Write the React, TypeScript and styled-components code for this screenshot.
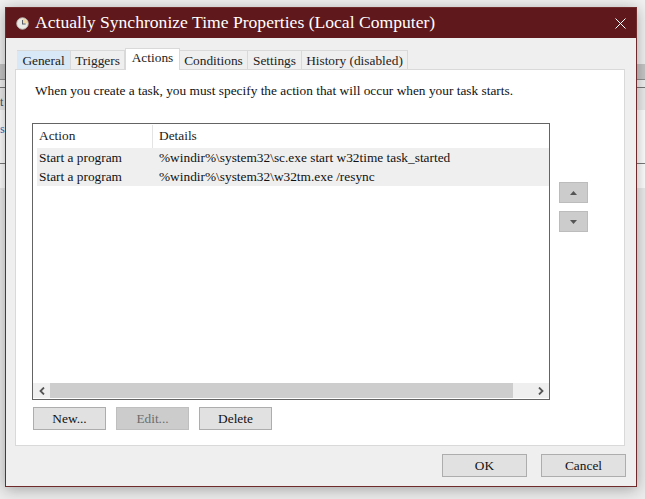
import React from 'react'
import styled, { createGlobalStyle } from 'styled-components'

const GlobalStyle = createGlobalStyle`
    html, body {
        margin: 0;
        padding: 0;
        width: 645px;
        height: 499px;
        overflow: hidden;
        background: #f1f1f1;
    }
    body {
        font-family: "Liberation Serif", "DejaVu Serif", serif;
        font-size: 13.35px;
        color: #111111;
    }
`

const Page = styled.div`
    position: relative;
    width: 645px;
    height: 499px;
    overflow: hidden;
`

// the blurred app behind the dialog, only its edges show
const Backdrop = styled.div`
    display: flex;
    flex-direction: column;
    width: 100%;
    height: 100%;
    padding-top: 64px;
    box-sizing: border-box;
`

const BackBand = styled.div<{ $h: number; $bg: string; $line?: string; $lh?: number }>`
    height: ${(p) => p.$h}px;
    background: ${(p) => p.$bg};
    border-bottom: ${(p) => (p.$line ? `1px solid ${p.$line}` : 'none')};
    flex: 0 0 auto;
    overflow: hidden;
    font-size: 12px;
    line-height: ${(p) => p.$lh ?? p.$h}px;
`

const BackGlyph = styled.span<{ $color: string }>`
    color: ${(p) => p.$color};
`

const Dialog = styled.div`
    position: absolute;
    left: 5px;
    top: 7px;
    width: 632px;
    height: 480px;
    box-sizing: border-box;
    border: 1px solid #6f2a2c;
    background: #efefef;
    box-shadow: 0 2px 14px rgba(0, 0, 0, 0.32);
    display: flex;
    flex-direction: column;
`

const TitleBar = styled.div`
    display: flex;
    align-items: center;
    height: 30px;
    flex: 0 0 auto;
    background: #5f181b;
    padding: 0 10px;
    color: #ffffff;
`

const Title = styled.div`
    font-size: 17.6px;
    line-height: 28px;
    height: 30px;
    flex: 1;
    margin-left: 6px;
    white-space: nowrap;
`

const CloseIcon = styled.svg`
    width: 11px;
    height: 11px;
`

const Body = styled.div`
    flex: 1;
    display: flex;
    flex-direction: column;
    padding: 12px 10px 0 9px;
`

const TabRow = styled.div`
    display: flex;
    align-items: flex-end;
    height: 20px;
    padding-left: 2px;
    position: relative;
    z-index: 1;
    margin-bottom: -1px;
`

const Tab = styled.div<{ $active?: boolean; $hover?: boolean; $w: number }>`
    box-sizing: border-box;
    width: ${(p) => p.$w}px;
    height: ${(p) => (p.$active ? 22 : 20)}px;
    line-height: ${(p) => (p.$active ? 18 : 20)}px;
    text-align: center;
    white-space: nowrap;
    background: ${(p) => (p.$active ? '#ffffff' : p.$hover ? '#d8e8f6' : '#efefef')};
    border: 1px solid #d9d9d9;
    border-left-width: ${(p) => (p.$active ? 1 : 0)}px;
    border-bottom: ${(p) => (p.$active ? 'none' : '1px solid #d9d9d9')};
    color: #222222;
`

const Panel = styled.div`
    box-sizing: border-box;
    width: 610px;
    height: 377px;
    background: #ffffff;
    border: 1px solid #d9d9d9;
    padding: 14px 16px 0 16px;
    display: flex;
    flex-direction: column;
`

const Intro = styled.div`
    height: 40px;
    line-height: 14px;
    margin-left: 3px;
    white-space: nowrap;
`

const ListRow = styled.div`
    display: flex;
    margin-top: -1px;
`

const ListBox = styled.div`
    box-sizing: border-box;
    width: 518px;
    height: 277px;
    border: 1px solid #646464;
    display: flex;
    flex-direction: column;
    padding-top: 1px;
`

const ListHeader = styled.div`
    display: flex;
    height: 23px;
    flex: 0 0 auto;
`

const HeaderCell = styled.div<{ $w?: number }>`
    box-sizing: border-box;
    ${(p) => (p.$w ? `width: ${p.$w}px;` : 'flex: 1;')}
    height: 100%;
    line-height: 21px;
    padding-left: 6px;
    color: #222222;
    border-right: ${(p) => (p.$w ? '1px solid #e4e4e4' : 'none')};
`

const ListRows = styled.div`
    flex: 1;
`

const ActionRow = styled.div`
    display: flex;
    height: 19px;
    line-height: 20px;
    margin-left: 4px;
    background: #efefef;
    white-space: nowrap;
`

const ActionCell = styled.div<{ $w?: number }>`
    ${(p) => (p.$w ? `width: ${p.$w}px;` : 'flex: 1;')}
    padding-left: 2px;
    box-sizing: border-box;
`

const ScrollBar = styled.div`
    display: flex;
    height: 15px;
    flex: 0 0 auto;
    margin-bottom: 1px;
    background: #efefef;
`

const ScrollArrow = styled.div`
    width: 17px;
    display: flex;
    align-items: center;
    justify-content: center;
    flex: 0 0 auto;
`

const ScrollThumb = styled.div`
    flex: 1;
    background: #cdcdcd;
    margin-right: 19px;
`

const MoveColumn = styled.div`
    display: flex;
    flex-direction: column;
    gap: 8px;
    margin-left: 9px;
    padding-top: 59px;
`

const MoveButton = styled.div`
    box-sizing: border-box;
    width: 29px;
    height: 21px;
    background: #cccccc;
    border: 1px solid #bcbcbc;
    display: flex;
    align-items: center;
    justify-content: center;
`

const ButtonRow = styled.div`
    display: flex;
    gap: 10px;
    margin-top: 7px;
    margin-left: 1px;
`

const Button = styled.div<{ $disabled?: boolean }>`
    box-sizing: border-box;
    width: 73px;
    height: 23px;
    line-height: 21px;
    text-align: center;
    background: ${(p) => (p.$disabled ? '#cccccc' : '#e1e1e1')};
    border: 1px solid ${(p) => (p.$disabled ? '#bfbfbf' : '#adadad')};
    color: ${(p) => (p.$disabled ? '#6d6d6d' : '#111111')};
`

const Footer = styled.div`
    display: flex;
    justify-content: flex-end;
    gap: 14px;
    padding-top: 8px;
`

const FooterButton = styled(Button)`
    width: 85px;
`

const ClockIcon = () => (
    <svg width="13" height="13" viewBox="0 0 14 14">
        <circle cx="7" cy="7" r="6.2" fill="#e9e9e6" stroke="#b9b9b4" />
        <path d="M7 7V1.6A5.4 5.4 0 0 1 12.4 7Z" fill="#f0d9a8" />
        <path d="M7 3.2V7.6H10.4" fill="none" stroke="#56606a" strokeWidth="1.1" />
    </svg>
)

const Triangle = ({ dir }: { dir: 'up' | 'down' }) => (
    <svg width="7" height="4" viewBox="0 0 7 4">
        <path d={dir === 'up' ? 'M0 4L3.5 0L7 4Z' : 'M0 0L7 0L3.5 4Z'} fill="#555555" />
    </svg>
)

const Chevron = ({ dir }: { dir: 'left' | 'right' }) => (
    <svg width="6" height="8" viewBox="0 0 6 8">
        <path
            d={dir === 'left' ? 'M5 .5L1.5 4L5 7.5' : 'M1 .5L4.5 4L1 7.5'}
            fill="none"
            stroke="#555555"
            strokeWidth="1.8"
        />
    </svg>
)

const tabs = [
    { label: 'General', w: 54, hover: true },
    { label: 'Triggers', w: 54 },
    { label: 'Actions', w: 55, active: true },
    { label: 'Conditions', w: 68 },
    { label: 'Settings', w: 54 },
    { label: 'History (disabled)', w: 106 },
]

const actions = [
    '%windir%\\system32\\sc.exe start w32time task_started',
    '%windir%\\system32\\w32tm.exe /resync',
]

export default function App() {
    return (
        <Page>
            <GlobalStyle />
            <Backdrop>
                <BackBand $h={15} $bg="#c6c6c6" $line="#8f8f8f" />
                <BackBand $h={7} $bg="#f1f1f1" $line="#777777" />
                <BackBand $h={22} $bg="#ececec" $lh={28}>
                    <BackGlyph $color="#34506e">t</BackGlyph>
                </BackBand>
                <BackBand $h={53} $bg="#ffffff" $line="#7a7a7a" $lh={38}>
                    <BackGlyph $color="#1a6fc4">s</BackGlyph>
                </BackBand>
                <BackBand $h={24} $bg="#ffffff" />
                <BackBand $h={400} $bg="#ececec" />
            </Backdrop>
            <Dialog>
                <TitleBar>
                    <ClockIcon />
                    <Title>Actually Synchronize Time Properties (Local Computer)</Title>
                    <CloseIcon viewBox="0 0 11 11">
                        <path d="M.5 .5L10.5 10.5M10.5 .5L.5 10.5" stroke="#ffffff" strokeWidth="1" />
                    </CloseIcon>
                </TitleBar>
                <Body>
                    <TabRow>
                        {tabs.map((t) => (
                            <Tab key={t.label} $w={t.w} $active={t.active} $hover={t.hover}>
                                {t.label}
                            </Tab>
                        ))}
                    </TabRow>
                    <Panel>
                        <Intro>When you create a task, you must specify the action that will occur when your task starts.</Intro>
                        <ListRow>
                            <ListBox>
                                <ListHeader>
                                    <HeaderCell $w={120}>Action</HeaderCell>
                                    <HeaderCell>Details</HeaderCell>
                                </ListHeader>
                                <ListRows>
                                    {actions.map((a) => (
                                        <ActionRow key={a}>
                                            <ActionCell $w={120}>Start a program</ActionCell>
                                            <ActionCell>{a}</ActionCell>
                                        </ActionRow>
                                    ))}
                                </ListRows>
                                <ScrollBar>
                                    <ScrollArrow><Chevron dir="left" /></ScrollArrow>
                                    <ScrollThumb />
                                    <ScrollArrow><Chevron dir="right" /></ScrollArrow>
                                </ScrollBar>
                            </ListBox>
                            <MoveColumn>
                                <MoveButton><Triangle dir="up" /></MoveButton>
                                <MoveButton><Triangle dir="down" /></MoveButton>
                            </MoveColumn>
                        </ListRow>
                        <ButtonRow>
                            <Button>New...</Button>
                            <Button $disabled>Edit...</Button>
                            <Button>Delete</Button>
                        </ButtonRow>
                    </Panel>
                    <Footer>
                        <FooterButton>OK</FooterButton>
                        <FooterButton>Cancel</FooterButton>
                    </Footer>
                </Body>
            </Dialog>
        </Page>
    )
}
